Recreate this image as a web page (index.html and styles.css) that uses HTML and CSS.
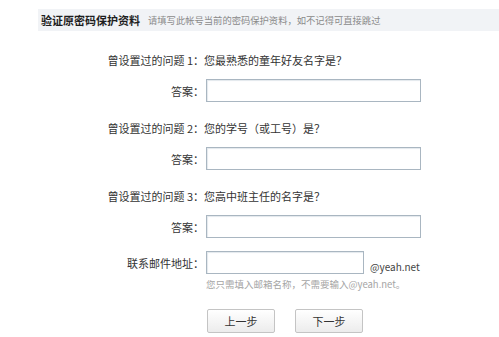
FILE: index.html
```html
<!DOCTYPE html>
<html lang="zh-CN">
<head>
  <meta charset="UTF-8">
  <meta name="viewport" content="width=device-width, initial-scale=1.0">
  <title>验证原密码保护资料</title>
  <link rel="stylesheet" href="styles.css">
</head>
<body>

  <!-- Section Header -->
  <div class="section-head">
    <h2>验证原密码保护资料</h2>
    <span class="tip">请填写此帐号当前的密码保护资料，如不记得可直接跳过</span>
  </div>

  <!-- Question Form -->
  <form class="form">
    <div class="row question">
      <label class="label">曾设置过的问题 1：</label>
      <span>您最熟悉的童年好友名字是？</span>
    </div>
    <div class="row answer">
      <label class="label">答案：</label>
      <input class="field" type="text">
    </div>

    <div class="row question">
      <label class="label">曾设置过的问题 2：</label>
      <span>您的学号（或工号）是？</span>
    </div>
    <div class="row answer">
      <label class="label">答案：</label>
      <input class="field" type="text">
    </div>

    <div class="row question">
      <label class="label">曾设置过的问题 3：</label>
      <span>您高中班主任的名字是？</span>
    </div>
    <div class="row answer">
      <label class="label">答案：</label>
      <input class="field" type="text">
    </div>

    <div class="row email">
      <label class="label">联系邮件地址：</label>
      <input class="field short" type="text">
      <span class="domain">@yeah.net</span>
    </div>
    <div class="row hint">
      <span class="label"></span>
      <span>您只需填入邮箱名称，不需要输入@yeah.net。</span>
    </div>

    <div class="row buttons">
      <span class="label"></span>
      <button class="btn" type="button">上一步</button>
      <button class="btn" type="button">下一步</button>
    </div>
  </form>

</body>
</html>
```

FILE: styles.css
```css
body {
  margin: 0;
  background: #fff;
  color: #333;
  font-family: "Noto Sans CJK SC", "Liberation Sans", sans-serif;
  font-size: 11px;
}

/* Header */
.section-head {
  margin: 9px 0 0 38px;
  height: 22px;
  background: #f1f3f6;
  display: flex;
  align-items: center;
  padding-left: 3px;
}

.section-head h2 {
  margin: 0;
  font-size: 11px;
  font-weight: bold;
  color: #1e1e1e;
}

.section-head .tip {
  margin-left: 8px;
  font-size: 9.3px;
  color: #8a8a8a;
}

/* Form rows */
.form {
  margin: 0;
}

.row {
  display: flex;
  align-items: center;
}

.label {
  width: 204px;
  flex: none;
  text-align: right;
}

.question {
  height: 20px;
}

.question:first-child {
  margin-top: 19px;
}

.answer {
  margin-top: 9px;
}

.answer + .question {
  margin-top: 16px;
}

.email {
  margin-top: 13px;
  align-items: flex-end;
}

.email .label {
  align-self: center;
}

.field {
  box-sizing: border-box;
  margin: 0 0 0 2px;
  width: 215px;
  height: 23px;
  border: 1px solid #a9b6c1;
  border-radius: 0;
  box-shadow: inset 1px 1px 1px #e3e8ed;
  background: #fff;
  padding: 0 4px;
}

.field.short {
  width: 158px;
}

.domain {
  margin-left: 6px;
  font-size: 10px;
  color: #444;
  line-height: 14px;
}

.hint {
  margin-top: 3px;
  font-size: 9.5px;
  color: #a5a5a5;
}

.hint span + span {
  margin-left: 2px;
}

/* Buttons */
.buttons {
  margin-top: 18px;
}

.btn {
  margin-left: 3px;
  width: 68px;
  height: 24px;
  border: 1px solid #c4c4c4;
  border-radius: 2px;
  background: linear-gradient(#ffffff, #ececec);
  color: #333;
  font-family: inherit;
  font-size: 11px;
  padding: 0;
}

.btn + .btn {
  margin-left: 20px;
}
```
